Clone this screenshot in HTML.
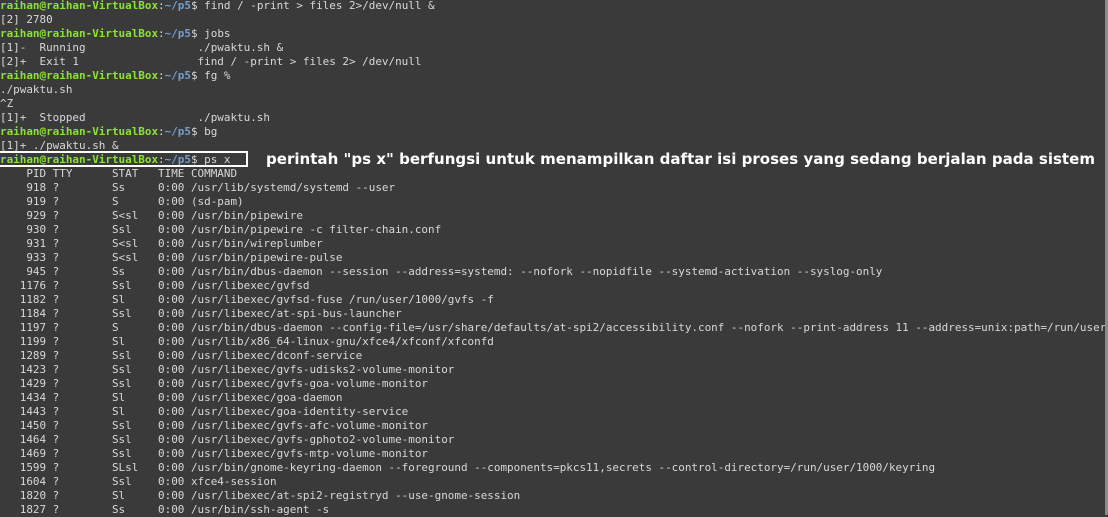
<!DOCTYPE html>
<html><head><meta charset="utf-8"><style>
html,body{margin:0;padding:0;width:1108px;height:515px;overflow:hidden;background:#3a3a3a}
pre{position:absolute;left:0;top:-1px;margin:0;font-family:"DejaVu Sans Mono","Liberation Mono",monospace;font-size:10.95px;line-height:14px;color:#d8d8d8;white-space:pre}
.g{color:#8ae234;font-weight:bold}.b{color:#729fcf;font-weight:bold}
#box{position:absolute;left:0;top:151px;width:248px;height:16px;border:2px solid #fff;border-left:none;box-sizing:border-box}
#sb{position:absolute;left:1105px;top:0;width:3px;height:515px;background:#8a8a8a}
svg{position:absolute;left:0;top:0}
</style></head><body>
<pre><span class="g">raihan@raihan-VirtualBox</span>:<span class="b">~/p5</span>$ find / -print &gt; files 2&gt;/dev/null &amp;
[2] 2780
<span class="g">raihan@raihan-VirtualBox</span>:<span class="b">~/p5</span>$ jobs
[1]-  Running                 ./pwaktu.sh &amp;
[2]+  Exit 1                  find / -print &gt; files 2&gt; /dev/null
<span class="g">raihan@raihan-VirtualBox</span>:<span class="b">~/p5</span>$ fg %
./pwaktu.sh
^Z
[1]+  Stopped                 ./pwaktu.sh
<span class="g">raihan@raihan-VirtualBox</span>:<span class="b">~/p5</span>$ bg
[1]+ ./pwaktu.sh &amp;
<span class="g">raihan@raihan-VirtualBox</span>:<span class="b">~/p5</span>$ ps x
    PID TTY      STAT   TIME COMMAND
    918 ?        Ss     0:00 /usr/lib/systemd/systemd --user
    919 ?        S      0:00 (sd-pam)
    929 ?        S&lt;sl   0:00 /usr/bin/pipewire
    930 ?        Ssl    0:00 /usr/bin/pipewire -c filter-chain.conf
    931 ?        S&lt;sl   0:00 /usr/bin/wireplumber
    933 ?        S&lt;sl   0:00 /usr/bin/pipewire-pulse
    945 ?        Ss     0:00 /usr/bin/dbus-daemon --session --address=systemd: --nofork --nopidfile --systemd-activation --syslog-only
   1176 ?        Ssl    0:00 /usr/libexec/gvfsd
   1182 ?        Sl     0:00 /usr/libexec/gvfsd-fuse /run/user/1000/gvfs -f
   1184 ?        Ssl    0:00 /usr/libexec/at-spi-bus-launcher
   1197 ?        S      0:00 /usr/bin/dbus-daemon --config-file=/usr/share/defaults/at-spi2/accessibility.conf --nofork --print-address 11 --address=unix:path=/run/user
   1199 ?        Sl     0:00 /usr/lib/x86_64-linux-gnu/xfce4/xfconf/xfconfd
   1289 ?        Ssl    0:00 /usr/libexec/dconf-service
   1423 ?        Ssl    0:00 /usr/libexec/gvfs-udisks2-volume-monitor
   1429 ?        Ssl    0:00 /usr/libexec/gvfs-goa-volume-monitor
   1434 ?        Sl     0:00 /usr/libexec/goa-daemon
   1443 ?        Sl     0:00 /usr/libexec/goa-identity-service
   1450 ?        Ssl    0:00 /usr/libexec/gvfs-afc-volume-monitor
   1464 ?        Ssl    0:00 /usr/libexec/gvfs-gphoto2-volume-monitor
   1469 ?        Ssl    0:00 /usr/libexec/gvfs-mtp-volume-monitor
   1599 ?        SLsl   0:00 /usr/bin/gnome-keyring-daemon --foreground --components=pkcs11,secrets --control-directory=/run/user/1000/keyring
   1604 ?        Ssl    0:00 xfce4-session
   1820 ?        Sl     0:00 /usr/libexec/at-spi2-registryd --use-gnome-session
   1827 ?        Ss     0:00 /usr/bin/ssh-agent -s</pre>
<div id="box"></div>
<svg width="1108" height="515"><text x="266" y="164" textLength="829" lengthAdjust="spacingAndGlyphs" fill="#fff" font-family="DejaVu Sans, Liberation Sans, sans-serif" font-weight="bold" font-size="15">perintah "ps x" berfungsi untuk menampilkan daftar isi proses yang sedang berjalan pada sistem</text></svg>
<div id="sb"></div>
</body></html>
